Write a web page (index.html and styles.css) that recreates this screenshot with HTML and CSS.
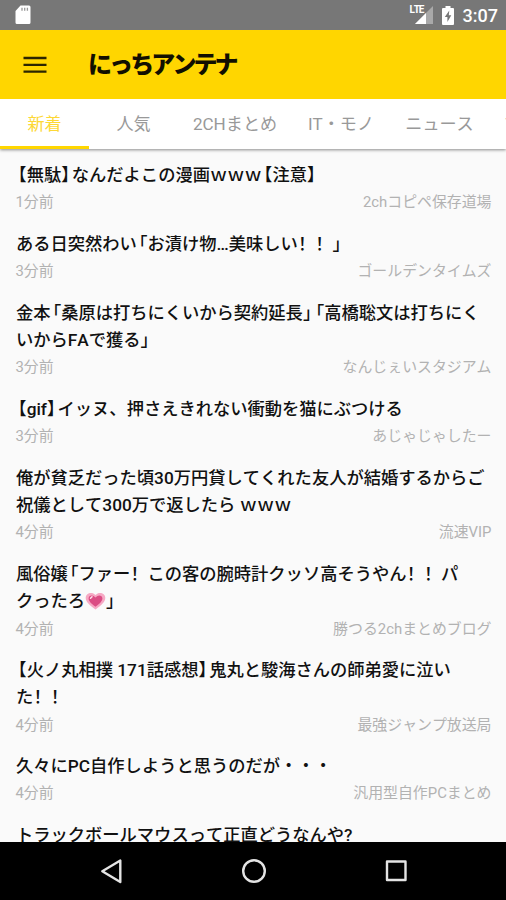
FILE: index.html
```html
<!DOCTYPE html>
<html lang="ja">
<head>
<meta charset="utf-8">
<title>にっちアンテナ</title>
<link rel="stylesheet" href="styles.css">
</head>
<body>
<div class="screen">
  <div class="status">
    <svg class="sd" width="16" height="20" viewBox="0 0 16 20"><path fill="#fff" d="M5.500 .5H14a1.500 1.500 0 0 1 1.500 1.500v15.500a1.500 1.500 0 0 1-1.500 1.500H2A1.500 1.500 0 0 1 .5 17.500V6z"/><path stroke="#999" stroke-width="1.300" d="M7 2.800v3M9.700 2.800v3M12.400 2.800v3"/></svg>
    <div class="status-right">
      <div class="signal"><span class="lte">LTE</span><svg width="18" height="18" viewBox="0 0 18 18"><path fill="#a9a9a9" d="M18 0v18H0z"/><path fill="#fff" d="M11 7v11H0z"/></svg></div>
      <svg class="battery" width="12" height="19" viewBox="0 0 12 19"><path fill="#fff" d="M3.500 0h5v2H11a1 1 0 0 1 1 1v15a1 1 0 0 1-1 1H1a1 1 0 0 1-1-1V3a1 1 0 0 1 1-1h2.500z"/><path fill="#777" d="M7.300 4.500 2.800 11h2.600v5L9.300 9.300H6.800z"/></svg>
      <span class="clock">3:07</span>
    </div>
  </div>
  <header class="appbar">
    <svg class="menu" width="24" height="18" viewBox="0 0 24 18"><path stroke="#2b2500" stroke-width="2.300" d="M.5 2h23M.5 8.900h23M.5 15.700h23"/></svg>
    <h1 class="brand">にっちアンテナ</h1>
  </header>
  <nav class="tabs">
    <span class="tab active">新着</span>
    <span class="tab">人気</span>
    <span class="tab wide">2CHまとめ</span>
    <span class="tab mono">IT・モノ</span>
    <span class="tab news">ニュース</span>
    <span class="tab next">マンガ</span>
  </nav>
  <main class="list">
    <article class="item"><h2><b class="o">【</b>無駄<b class="c">】</b>なんだよこの漫画ｗｗｗ<b class="o">【</b>注意<b class="c">】</b></h2><p><span>1分前</span><span>2chコピペ保存道場</span></p></article>
    <article class="item"><h2>ある日突然わい<b class="o">「</b>お漬け物…美味しい<i>！！</i><b class="c">」</b></h2><p><span>3分前</span><span>ゴールデンタイムズ</span></p></article>
    <article class="item"><h2>金本<b class="o">「</b>桑原は打ちにくいから契約延長<b class="c">」</b><b class="o">「</b>高橋聡文は打ちにく<br>いからFAで獲る<b class="c">」</b></h2><p><span>3分前</span><span>なんじぇいスタジアム</span></p></article>
    <article class="item"><h2><b class="o">【</b>gif<b class="c">】</b>イッヌ、押さえきれない衝動を猫にぶつける</h2><p><span>3分前</span><span>あじゃじゃしたー</span></p></article>
    <article class="item"><h2>俺が貧乏だった頃30万円貸してくれた友人が結婚するからご<br>祝儀として300万で返したら ｗｗｗ</h2><p><span>4分前</span><span>流速VIP</span></p></article>
    <article class="item"><h2>風俗嬢<b class="o">「</b>ファー<i>！</i>この客の腕時計クッソ高そうやん<i>！！</i>パ<br>クったろ<svg class="heart" width="21" height="18" viewBox="0 0 21 18"><path fill="#f6a9c4" d="M10.500 17.500C4 13 .7 9.500.7 5.800.7 1 7.200-.8 10.500 3 13.800-.8 20.300 1 20.300 5.800c0 3.700-3.300 7.200-9.800 11.700z"/><path fill="#db4d84" d="M10.500 14.800C5.600 11.300 3.600 8.800 3.600 6.300c0-3.300 4.400-4.100 6.900-.8 2.500-3.300 6.900-2.500 6.900.8 0 2.500-2 5-6.900 8.500z"/><path stroke="#ffe1ec" stroke-width="1.500" stroke-linecap="round" d="m5.500 6.200 1.500-1.500"/></svg><b class="c">」</b></h2><p><span>4分前</span><span>勝つる2chまとめブログ</span></p></article>
    <article class="item"><h2><b class="o">【</b>火ノ丸相撲 171話感想<b class="c">】</b>鬼丸と駿海さんの師弟愛に泣い<br>た<i>！！</i></h2><p><span>4分前</span><span>最強ジャンプ放送局</span></p></article>
    <article class="item"><h2>久々にPC自作しようと思うのだが・・・</h2><p><span>4分前</span><span>汎用型自作PCまとめ</span></p></article>
    <article class="item"><h2>トラックボールマウスって正直どうなんや?</h2></article>
  </main>
  <footer class="navbar">
    <svg width="506" height="58" viewBox="0 0 506 58" fill="none" stroke="#e4e4e4" stroke-width="2.400" stroke-linejoin="round"><path d="M120.300 18.500v21.500L102.300 29.200z"/><circle cx="254" cy="29" r="10.800"/><path d="M387 19.500h18.500v18.500H387z"/></svg>
  </footer>
</div>
</body>
</html>
```
FILE: styles.css
```css
* { box-sizing: border-box; }
body {
  margin: 0;
  font-family: Roboto, "Noto Sans CJK JP", sans-serif;
  font-kerning: none;
  text-spacing-trim: space-all;
}
h1, h2, p { margin: 0; }
.screen {
  width: 506px;
  height: 900px;
  display: flex;
  flex-direction: column;
  overflow: hidden;
  background: #fafafa;
}
.status {
  flex: none;
  height: 30px;
  padding: 0 8px 0 15px;
  display: flex;
  justify-content: space-between;
  align-items: center;
  background: #777;
  color: #fff;
}
.status-right { display: flex; align-items: center; }
.signal { position: relative; width: 23px; height: 18px; display: flex; align-items: flex-end; padding-left: 5px; }
.lte {
  position: absolute;
  left: 0;
  top: -1px;
  font-size: 10px;
  line-height: 9px;
  font-weight: 700;
  letter-spacing: -1.200px;
  padding-right: 1px;
  background: #777;
}
.battery { margin: 0 9px; }
.clock { font-size: 18px; font-weight: 500; line-height: 30px; padding-top: 2px; }
.appbar {
  flex: none;
  height: 69px;
  display: flex;
  align-items: center;
  background: #ffd600;
  padding-left: 23px;
}
.brand {
  margin-left: 41px;
  font-size: 24px;
  line-height: 30px;
  font-weight: 900;
  letter-spacing: -2.900px;
  color: #120f00;
  white-space: nowrap;
}
.tabs {
  flex: none;
  height: 50px;
  display: flex;
  background: #fff;
  box-shadow: 0 1px 3px rgba(0, 0, 0, .45);
  clip-path: inset(0 0 -5px 0);
}
.tab {
  flex: none;
  width: 89px;
  font-size: 17.100px;
  line-height: 50px;
  text-align: center;
  color: #999;
  white-space: nowrap;
}
.active { color: #fdd835; border-bottom: 3px solid #ffd600; }
.wide { width: 114px; }
.mono { width: 98px; }
.news { width: 99px; }
.next { width: 89px; text-align: left; padding-left: 15px; }
.list { flex: 1; min-height: 0; overflow: hidden; padding-top: 6.100px; }
.item { padding: 7px 14.500px 7.250px 16px; }
.item h2 {
  font-size: 17.280px;
  line-height: 27.300px;
  font-weight: 500;
  color: #111;
  white-space: nowrap;
}
.item b { font-weight: 500; font-feature-settings: "halt"; }
.item i { font-style: normal; margin: 0 4px 0 -4px; }
.o { padding-left: 2px; }
.c { padding-right: 2px; }
.item p {
  display: flex;
  justify-content: space-between;
  margin-left: -.5px;
  font-size: 14.900px;
  line-height: 27.300px;
  color: #b2b2b2;
}
.heart { vertical-align: -3px; }
.navbar { flex: none; height: 58px; background: #000; }
.navbar svg { display: block; }
```
